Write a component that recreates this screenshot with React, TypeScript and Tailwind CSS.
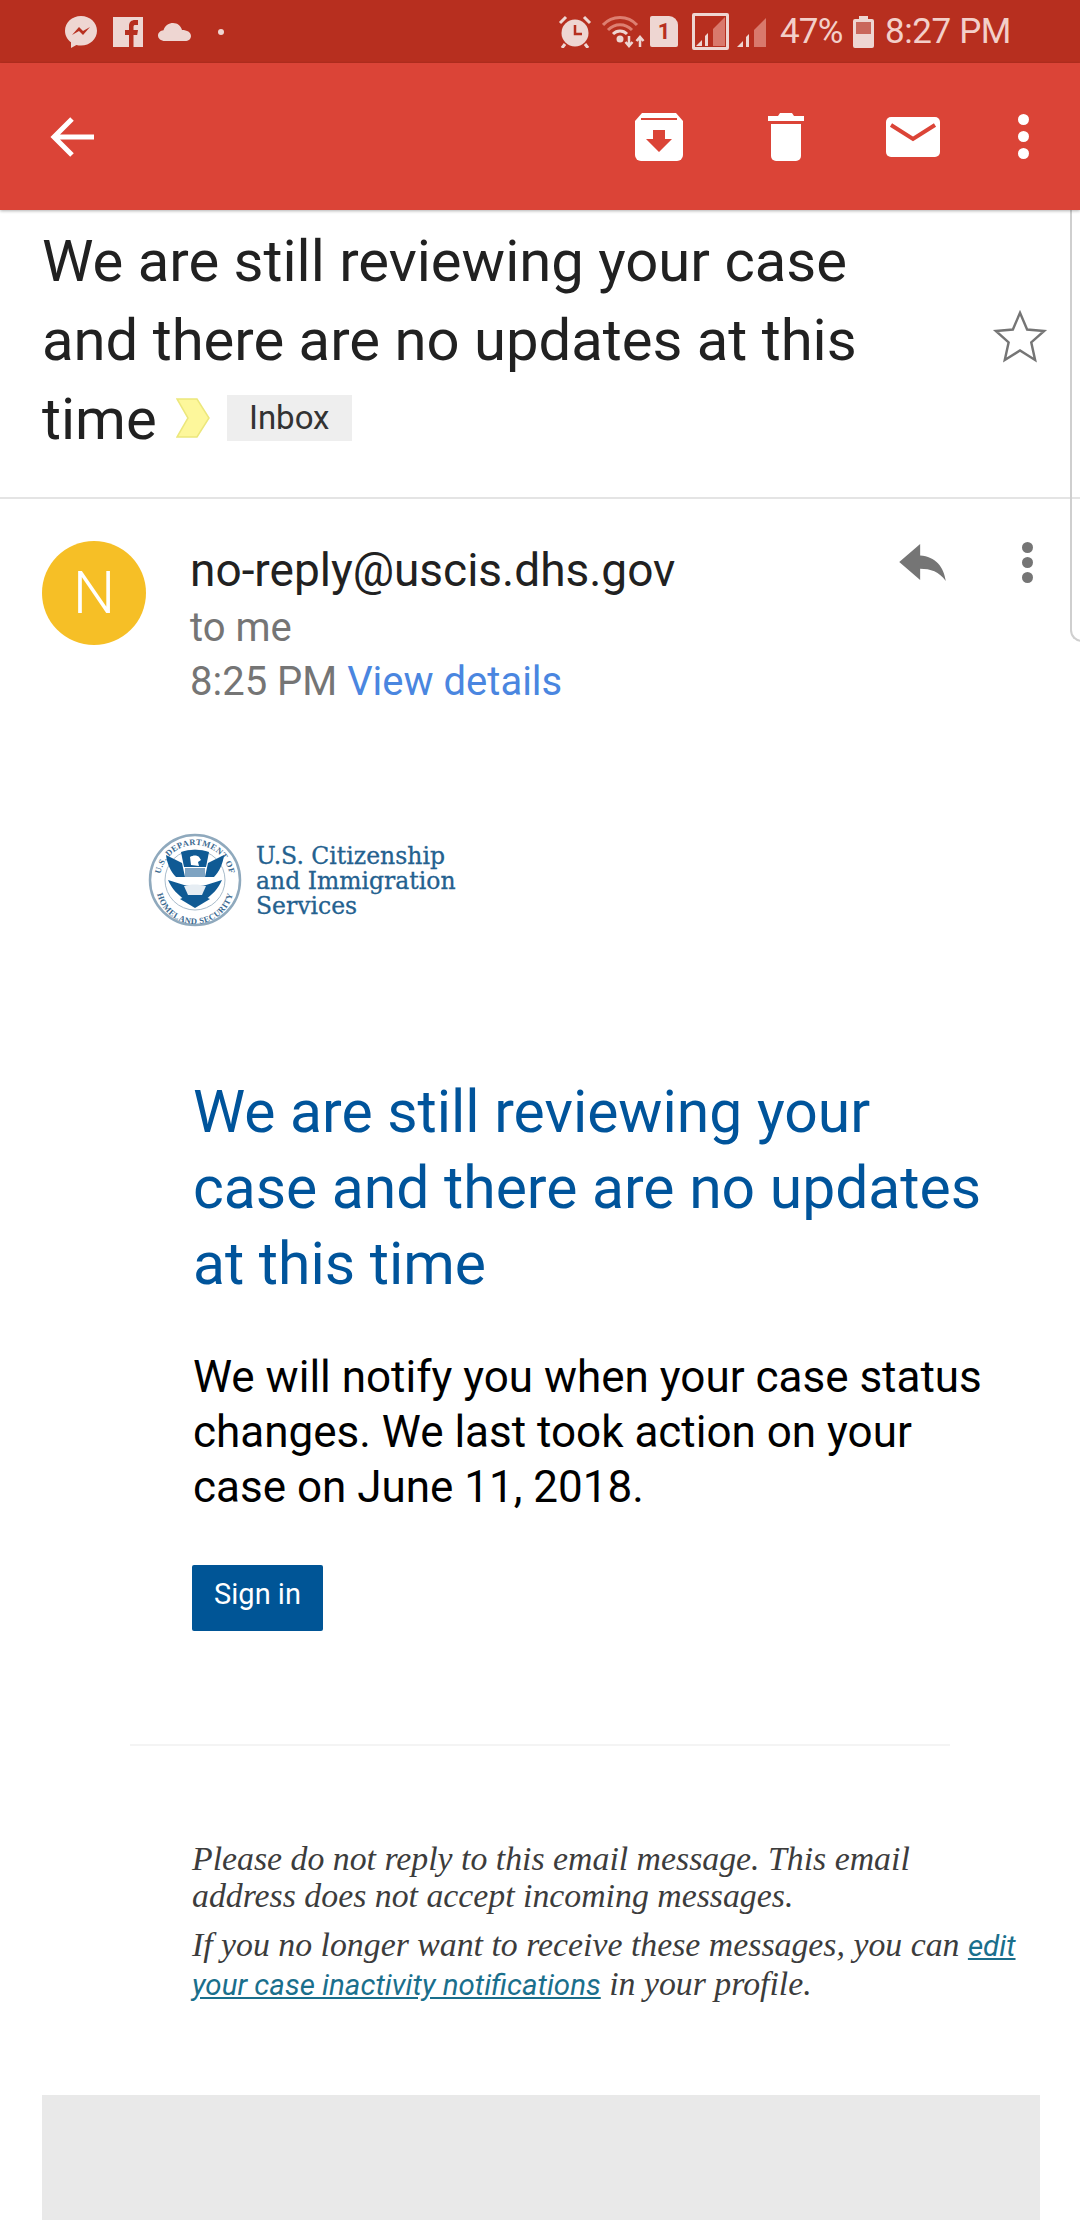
const roboto = "font-['Roboto',sans-serif]";

function StatusIcons() {
    return (
        <div className="flex items-center">
            <svg width="34" height="34" viewBox="0 0 34 34" className="ml-[64px]">
                <path d="M17 1C8 1 1 7.600 1 15.800c0 4.700 2.300 8.800 6 11.500V33l5.400-3c1.500.4 3 .6 4.600.6 9 0 16-6.600 16-14.800S26 1 17 1z" fill="#eed6d2" />
                <path d="M8 20l7-8 4 4 7-4-7 8-4-4z" fill="#b72f1f" />
            </svg>
            <svg width="30" height="30" viewBox="0 0 30 30" className="ml-[15px]">
                <rect width="30" height="30" fill="#eed6d2" />
                <path d="M16 30V18h-4v-5h4v-4c0-4 2.400-6 6-6h3v5h-2.500c-1.500 0-2 .6-2 2v3H25l-.8 5h-3.700v12z" fill="#b72f1f" />
            </svg>
            <svg width="34" height="20" viewBox="0 0 34 20" className="ml-[15px]">
                <path d="M7 19C3 19 0 16.500 0 13.500c0-3 2.500-5 5.500-5.300C7 3.500 11 1 15 1c4.500 0 8 2.800 9 7 5 0 9 2.300 9 6 0 3-2.500 5-6 5z" fill="#eed6d2" />
            </svg>
            <span className="w-[6px] h-[6px] rounded-full bg-[#eed6d2] ml-[26px]" />
        </div>
    );
}

function StatusRight() {
    return (
        <div className="flex items-center mr-[70px]">
            <svg width="34" height="33" viewBox="0 0 34 33">
                <circle cx="17" cy="18" r="13.500" fill="#eed6d2" />
                <path d="M17 10v9h7" fill="none" stroke="#b72f1f" strokeWidth="2.500" />
                <path d="M2 8l6-6M32 8l-6-6" stroke="#eed6d2" strokeWidth="3" />
                <path d="M7 29l-3 4M27 29l3 4" stroke="#eed6d2" strokeWidth="3" />
            </svg>
            <svg width="44" height="32" viewBox="0 0 44 32" className="ml-[10px]">
                <path d="M1 9C10 -1 26 -1 35 9M6 14c7-7 17-7 24 0" fill="none" stroke="#dd7f71" strokeWidth="3" />
                <path d="M11 18c4-4 10-4 14 0" fill="none" stroke="#eed6d2" strokeWidth="3" />
                <circle cx="18" cy="23" r="3.500" fill="#eed6d2" />
                <path d="M27 20v9M23.500 26l3.500 4 3.500-4M38 31v-9M34.500 25l3.500-4 3.500 4" fill="none" stroke="#eed6d2" strokeWidth="2.500" />
            </svg>
            <div className="ml-[4px] w-[28px] h-[31px] bg-[#eed6d2] rounded-tl-[2px] rounded-tr-[9px] rounded-b-[2px] flex items-center justify-center text-[22px] leading-none font-bold text-[#b72f1f]">1</div>
            <div className="ml-[14px] w-[37px] h-[37px] border-[3px] border-[#eed6d2] rounded-[2px] flex items-end justify-center overflow-hidden">
                <SignalBars />
            </div>
            <div className="ml-[7px] mt-[1px]">
                <SignalBars />
            </div>
            <span className="ml-[13px] w-[60px] whitespace-nowrap text-[35px] leading-none text-[#f3cfc9] tracking-[-0.8px]">47%</span>
            <svg width="21" height="32" viewBox="0 0 21 32" className="ml-[13px]">
                <path d="M6 0h9v3h4a2 2 0 0 1 2 2v25a2 2 0 0 1-2 2H2a2 2 0 0 1-2-2V5a2 2 0 0 1 2-2h4z" fill="#eed6d2" />
                <rect x="3" y="6" width="15" height="12" fill="#c9675b" />
            </svg>
            <span className="ml-[11px] w-[125px] whitespace-nowrap text-[35px] leading-none text-[#f3cfc9] tracking-[-0.4px]">8:27 PM</span>
        </div>
    );
}

function SignalBars() {
    return (
        <svg width="31" height="31" viewBox="0 0 31 31">
            <path d="M1 30l6-6v6z" fill="#eed6d2" />
            <path d="M10 30V20l3-3v13z" fill="#eed6d2" />
            <path d="M18 30V13L30 1v29z" fill="#d9796c" />
        </svg>
    );
}

function Toolbar() {
    return (
        <div className="h-[147px] bg-[#db4437] flex items-center shadow-[0_1px_3px_rgba(0,0,0,0.3)] relative z-10">
            <svg width="44" height="42" viewBox="0 0 44 42" className="ml-[50px]">
                <path d="M22 3L4 21l18 18M5 21h39" fill="none" stroke="#fff" strokeWidth="5" />
            </svg>
            <svg width="48" height="48" viewBox="0 0 48 48" className="ml-auto">
                <path d="M7 0h34l7 8v34a6 6 0 0 1-6 6H6a6 6 0 0 1-6-6V8z" fill="#fff" />
                <path d="M6 6h36" stroke="#db4437" strokeWidth="2" />
                <path d="M18 17h12v9h7L24 39 11 26h7z" fill="#db4437" />
            </svg>
            <svg width="36" height="48" viewBox="0 0 36 48" className="ml-[85px]">
                <path d="M12 0h12l2 3h10v5H0V3h10z" fill="#fff" />
                <path d="M3 11h30v32a5 5 0 0 1-5 5H8a5 5 0 0 1-5-5z" fill="#fff" />
            </svg>
            <svg width="54" height="40" viewBox="0 0 54 40" className="ml-[82px]">
                <rect width="54" height="40" rx="5" fill="#fff" />
                <path d="M5 8l22 14L49 8" fill="none" stroke="#db4437" strokeWidth="4" />
            </svg>
            <div className="ml-[78px] mr-[51px] flex flex-col gap-[6px]">
                <span className="w-[11px] h-[11px] rounded-full bg-white" />
                <span className="w-[11px] h-[11px] rounded-full bg-white" />
                <span className="w-[11px] h-[11px] rounded-full bg-white" />
            </div>
        </div>
    );
}

function Seal() {
    return (
        <svg width="94" height="94" viewBox="0 0 94 94">
            <circle cx="47" cy="47" r="45" fill="#fff" stroke="#8fa9bd" strokeWidth="2.500" />
            <circle cx="47" cy="47" r="30" fill="#fff" stroke="#a9bccb" strokeWidth="1" />
            <defs>
                <path id="sealTop" d="M12 47a35 35 0 0 1 70 0" />
                <path id="sealBottom" d="M8 52a39 39 0 0 0 78 0" />
            </defs>
            <text fontSize="8.500" fontWeight="700" fill="#3c6a90" fontFamily="Liberation Serif, serif" letterSpacing="0.4">
                <textPath href="#sealTop" startOffset="50%" textAnchor="middle">U.S. DEPARTMENT OF</textPath>
            </text>
            <text fontSize="8.500" fontWeight="700" fill="#3c6a90" fontFamily="Liberation Serif, serif" letterSpacing="0.4">
                <textPath href="#sealBottom" startOffset="50%" textAnchor="middle">HOMELAND SECURITY</textPath>
            </text>
            <path d="M18 22l16 8 3 14H28c-5-5-9-13-10-22zM76 22l-16 8-3 14h9c5-5 9-13 10-22z" fill="#0f5a94" />
            <path d="M33 19c9-3 19-3 28 0l-3 15H36z" fill="#0f5a94" />
            <path d="M42 24c3-2 7-2 9 0l2 3-3 2 1 4-8-1z" fill="#fff" />
            <path d="M37 35h20v9H37z" fill="#7ea3c2" />
            <path d="M20 47c4 9 10 15 16 19h22c6-4 12-10 16-19l-16 5H36z" fill="#0f5a94" />
            <path d="M36 53c6-2 15-2 22 0l-4 9H40z" fill="#e6edf3" />
            <path d="M32 66l15 9 15-9-9-4H41z" fill="#0f5a94" />
        </svg>
    );
}

export default function App() {
    return (
        <div className={`relative w-[1080px] h-[2220px] overflow-hidden bg-white ${roboto}`}>
            <div className="h-[63px] bg-[#b72f1f] flex items-center justify-between">
                <StatusIcons />
                <StatusRight />
            </div>
            <Toolbar />

            {/* subject */}
            <div className="h-[289px] border-b-2 border-[#e4e4e4] relative pl-[42px] pt-[12px]">
                <div className="text-[58px] leading-[79px] text-[#212121] w-[850px]">
                    We are still reviewing your case and there are no updates at this time
                    <span className="inline-flex items-center align-[1px] ml-[19px]">
                        <svg width="34" height="40" viewBox="0 0 34 40">
                            <path d="M1 1h20l12 19-12 19H1l11-19z" fill="#fdf79b" stroke="#ece77c" strokeWidth="1.500" />
                        </svg>
                        <span className="ml-[17px] w-[125px] h-[46px] bg-[#eeeeee] text-[33px] leading-[46px] text-center text-[#333]">Inbox</span>
                    </span>
                </div>
                <svg width="58" height="58" viewBox="0 0 24 24" className="absolute right-[31px] top-[98px]">
                    <path d="M12 2l2.950 6.900 7.050.600-5.350 4.700 1.600 7.300L12 17.600 5.700 21.500l1.600-7.300L2 9.500l7.050-.600z" fill="none" stroke="#757575" strokeWidth="1" />
                </svg>
            </div>

            {/* sender */}
            <div className="flex pl-[42px] pt-[42px] h-[277px]">
                <div className="w-[104px] h-[104px] rounded-full bg-[#f6bf26] flex items-center justify-center text-white text-[60px] font-light">N</div>
                <div className="ml-[44px] w-[700px] pt-[2px]">
                    <div className="text-[46px] leading-[54px] text-[#212121]">no-reply@uscis.dhs.gov</div>
                    <div className="text-[40px] leading-[54px] text-[#757575] mt-[4px]">to me</div>
                    <div className="text-[40px] leading-[54px] text-[#757575]">8:25 PM <span className="text-[#4a86e0]">View details</span></div>
                </div>
                <svg width="48" height="38" viewBox="0 0 50 40" className="ml-[9px] mt-[3px]">
                    <path d="M22 0L0 19l22 19V26c11 0 20 3 27 13C47 24 38 13 22 12z" fill="#757575" />
                </svg>
                <div className="ml-[75px] mt-[1px] flex flex-col gap-[4px]">
                    <span className="w-[11px] h-[11px] rounded-full bg-[#757575]" />
                    <span className="w-[11px] h-[11px] rounded-full bg-[#757575]" />
                    <span className="w-[11px] h-[11px] rounded-full bg-[#757575]" />
                </div>
            </div>

            {/* logo */}
            <div className="flex items-center ml-[148px] h-[94px] mt-[57px]">
                <Seal />
                <div className="ml-[14px] mt-[2px] font-['DejaVu_Serif',serif] text-[#24618f] text-[23.500px] leading-[25px] [-webkit-text-stroke:0.3px_#24618f]">
                    <div>U.S. Citizenship</div>
                    <div>and Immigration</div>
                    <div>Services</div>
                </div>
            </div>

            {/* message */}
            <div className="ml-[193px] mt-[147px] w-[800px]">
                <h1 className="text-[58.800px] leading-[76px] text-[#00549b] w-[790px]">We are still reviewing your case and there are no updates at this time</h1>
                <p className="mt-[48px] text-[44px] leading-[55px] text-black w-[800px]">We will notify you when your case status changes. We last took action on your case on June 11, 2018.</p>
                <div className="mt-[50px] ml-[-1px] w-[131px] h-[66px] bg-[#005596] rounded-[2px] text-white text-[29px] leading-[58px] text-center">Sign in</div>
            </div>

            <div className="mt-[113px] ml-[130px] w-[820px] h-[2px] bg-[#f4f4f4]" />

            {/* footnote */}
            <div className="ml-[192px] mt-[94px] w-[860px] font-['Liberation_Serif',serif] italic text-[33.800px] leading-[37px] text-[#3c3c3c]">
                <p>Please do not reply to this email message. This email<br />address does not accept incoming messages.</p>
                <p className="mt-[12px]">If you no longer want to receive these messages, you can <span className={`underline text-[#1a6f8c] text-[29.500px] ${roboto}`}>edit<br />your case inactivity notifications</span> in your profile.</p>
            </div>

            <div className="absolute left-[42px] top-[2095px] w-[998px] h-[125px] bg-[#e9e9e9]" />
            <div className="absolute left-[1070px] top-[190px] w-[12px] h-[452px] border-l-2 border-y-2 border-[#cfcfcf] rounded-l-[12px]" />
        </div>
    );
}
